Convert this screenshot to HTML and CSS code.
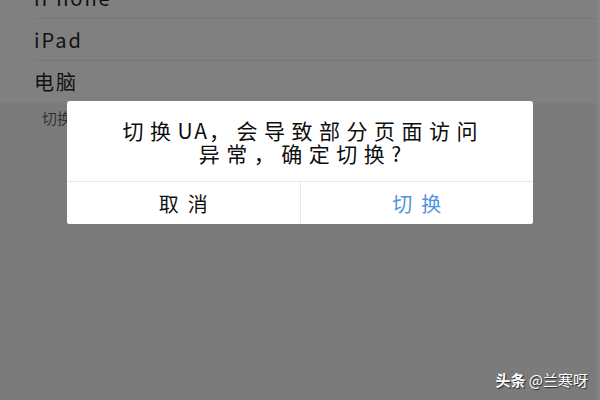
FILE: index.html
```html
<!DOCTYPE html>
<html lang="zh-CN">
<head>
  <meta charset="UTF-8">
  <meta name="viewport" content="width=device-width, initial-scale=1.0">
  <title>切换UA</title>
  <link rel="stylesheet" href="styles.css">
</head>
<body>
  <div class="page">
    <div class="ua-list">
      <div class="ua-item">iPhone</div>
      <div class="ua-item">iPad</div>
      <div class="ua-item">电脑</div>
    </div>
    <div class="ua-tip">切换后将以所选设备的身份访问网页</div>
  </div>

  <div class="mask">
    <div class="dialog">
      <div class="dialog-msg">
        <p>切换<span class="latin">UA</span>，会导致部分页面访问</p>
        <p>异常，确定切换?</p>
      </div>
      <div class="dialog-btns">
        <button class="btn btn-cancel">取消</button>
        <button class="btn btn-ok">切换</button>
      </div>
    </div>
  </div>

  <div class="watermark"><b>头条</b> @兰寒呀</div>
</body>
</html>
```

FILE: styles.css
```css
* {
  margin: 0;
  padding: 0;
  box-sizing: border-box;
}
body {
  width: 600px;
  height: 400px;
  overflow: hidden;
  position: relative;
  background: #7b7b7b;
  font-family: "Noto Sans CJK SC", "Noto Sans", sans-serif;
  color: #111;
}
.page {
  height: 100%;
  border-top: 1px solid #8a8a8a;
  border-right: 3px solid #858585;
}
.ua-list {
  margin-top: -24px;
  background: #808080;
}
.ua-item {
  height: 42px;
  line-height: 41px;
  margin-left: 34px;
  border-bottom: 1px solid #777;
  font-size: 20px;
  letter-spacing: 2px;
}
.ua-item:last-child {
  border-bottom: none;
}
.ua-tip {
  padding: 4px 0 0 42px;
  font-size: 15px;
  color: #333;
}
.mask {
  position: absolute;
  inset: 0;
  display: flex;
  justify-content: center;
  align-items: flex-start;
  padding-top: 101px;
}
.dialog {
  width: 466px;
  background: #fff;
  border-radius: 3px;
  overflow: hidden;
}
.dialog-msg {
  height: 81px;
  padding-top: 2px;
  display: flex;
  flex-direction: column;
  justify-content: center;
  text-align: center;
  font-size: 21px;
  line-height: 23px;
  letter-spacing: 6.5px;
  text-indent: 6.5px;
  color: #0d0d0d;
  border-bottom: 1px solid #e8e8e8;
}
.dialog-msg .latin {
  letter-spacing: 2px;
}
.dialog-btns {
  display: flex;
  height: 42px;
}
.btn {
  flex: 1;
  border: none;
  background: #fff;
  font-family: inherit;
  font-size: 20px;
  letter-spacing: 9px;
  text-indent: 9px;
  color: #111;
}
.btn-ok {
  border-left: 1px solid #e8e8e8;
  color: #4f93e3;
}
.watermark {
  position: absolute;
  right: 12px;
  bottom: 10px;
  font-size: 15px;
  color: #fff;
  text-shadow: 1px 1px 1px rgba(0, 0, 0, 0.7);
}
```
